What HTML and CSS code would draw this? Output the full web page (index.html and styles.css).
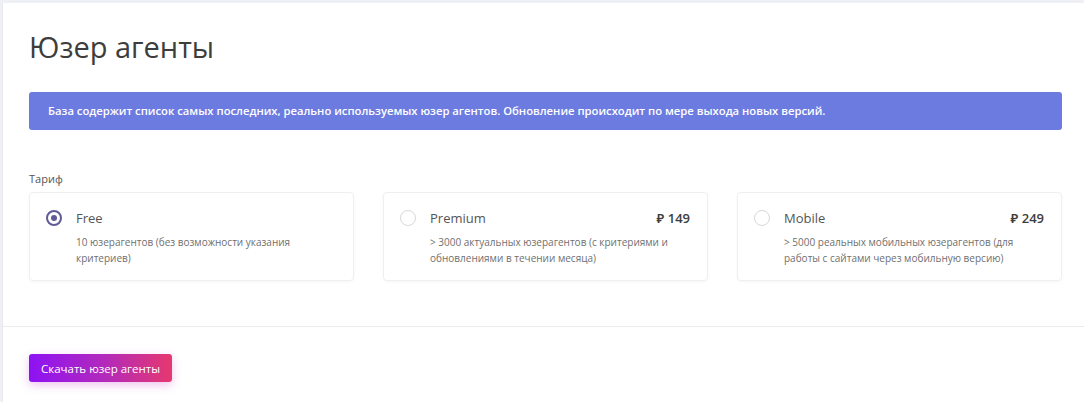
FILE: index.html
```html
<!DOCTYPE html>
<html lang="ru">
<head>
<meta charset="utf-8">
<title>Юзер агенты</title>
<link rel="stylesheet" href="styles.css">
</head>
<body>
<div class="page">
  <div class="panel">
    <section class="body">
      <h1 class="title">Юзер агенты</h1>
      <div class="alert">База содержит список самых последних, реально используемых юзер агентов. Обновление происходит по мере выхода новых версий.</div>
      <div class="label">Тариф</div>
      <div class="plans">
        <label class="plan">
          <span class="radio checked"></span>
          <div class="plan-main">
            <div class="plan-head"><span class="plan-name">Free</span></div>
            <div class="plan-desc">10 юзерагентов (без возможности указания критериев)</div>
          </div>
        </label>
        <label class="plan">
          <span class="radio"></span>
          <div class="plan-main">
            <div class="plan-head"><span class="plan-name">Premium</span><span class="price">₽ 149</span></div>
            <div class="plan-desc">&gt; 3000 актуальных юзерагентов (с критериями и обновлениями в течении месяца)</div>
          </div>
        </label>
        <label class="plan">
          <span class="radio"></span>
          <div class="plan-main">
            <div class="plan-head"><span class="plan-name">Mobile</span><span class="price">₽ 249</span></div>
            <div class="plan-desc">&gt; 5000 реальных мобильных юзерагентов (для работы с сайтами через мобильную версию)</div>
          </div>
        </label>
      </div>
    </section>
    <footer class="foot">
      <button class="btn">Скачать юзер агенты</button>
    </footer>
  </div>
</div>
</body>
</html>
```
FILE: styles.css
```css
* { box-sizing: border-box; }
html, body { margin: 0; padding: 0; }
body {
  background: #eef0f6;
  font-family: "Open Sans", "Noto Sans", sans-serif;
  color: #444;
  height: 402px;
  overflow: hidden;
}
.page { padding: 3px 0 0 2px; }
.panel {
  background: #fff;
  border-left: 1px solid #e8e9ee;
  min-height: 400px;
}
.body { padding: 25px 22px 45px 26px; border-bottom: 1px solid #ececef; }
.title {
  margin: 0;
  font-size: 29px;
  font-weight: 400;
  line-height: 38px;
  color: #3d3d3d;
}
.alert {
  margin-top: 26px;
  background: #6c7be0;
  color: #fff;
  font-size: 11.25px;
  font-weight: 600;
  height: 38px;
  line-height: 38px;
  padding: 0 19px;
  border-radius: 3px;
}
.label {
  margin-top: 41px;
  font-size: 11px;
  line-height: 15px;
  color: #555;
}
.plans {
  margin-top: 6px;
  display: grid;
  grid-template-columns: repeat(3, 1fr);
  column-gap: 29px;
}
.plan {
  display: flex;
  gap: 14px;
  border: 1px solid #efeff2;
  border-radius: 4px;
  box-shadow: 0 1px 3px rgba(0,0,0,0.04);
  padding: 16px 17px 14px 16px;
  min-height: 89px;
}
.radio {
  flex: none;
  width: 16px;
  height: 16px;
  border-radius: 50%;
  border: 1px solid #d8d8dc;
  margin-top: 1px;
  position: relative;
}
.radio.checked { border: 2px solid #5f5b96; }
.radio.checked::after {
  content: "";
  position: absolute;
  left: 3px; top: 3px;
  width: 6px; height: 6px;
  border-radius: 50%;
  background: #5f5b96;
}
.plan-main { flex: 1; }
.plan-head {
  display: flex;
  justify-content: space-between;
  font-size: 13px;
  line-height: 18px;
  color: #555;
}
.price { font-weight: 600; color: #3d3d3d; }
.plan-desc {
  margin-top: 7px;
  font-size: 10px;
  line-height: 16px;
  color: #6f6f6f;
  padding-right: 10px;
}
.foot { padding: 27px 26px; }
.btn {
  font-family: "Open Sans", "Noto Sans", sans-serif;
  font-size: 11.5px;
  color: #fff;
  border: 0;
  border-radius: 3px;
  height: 28px;
  padding: 0 12px;
  background: linear-gradient(90deg, #8d12f4 0%, #b42bb8 55%, #e6386f 100%);
  box-shadow: 0 3px 10px rgba(200, 60, 200, 0.3);
}
```
